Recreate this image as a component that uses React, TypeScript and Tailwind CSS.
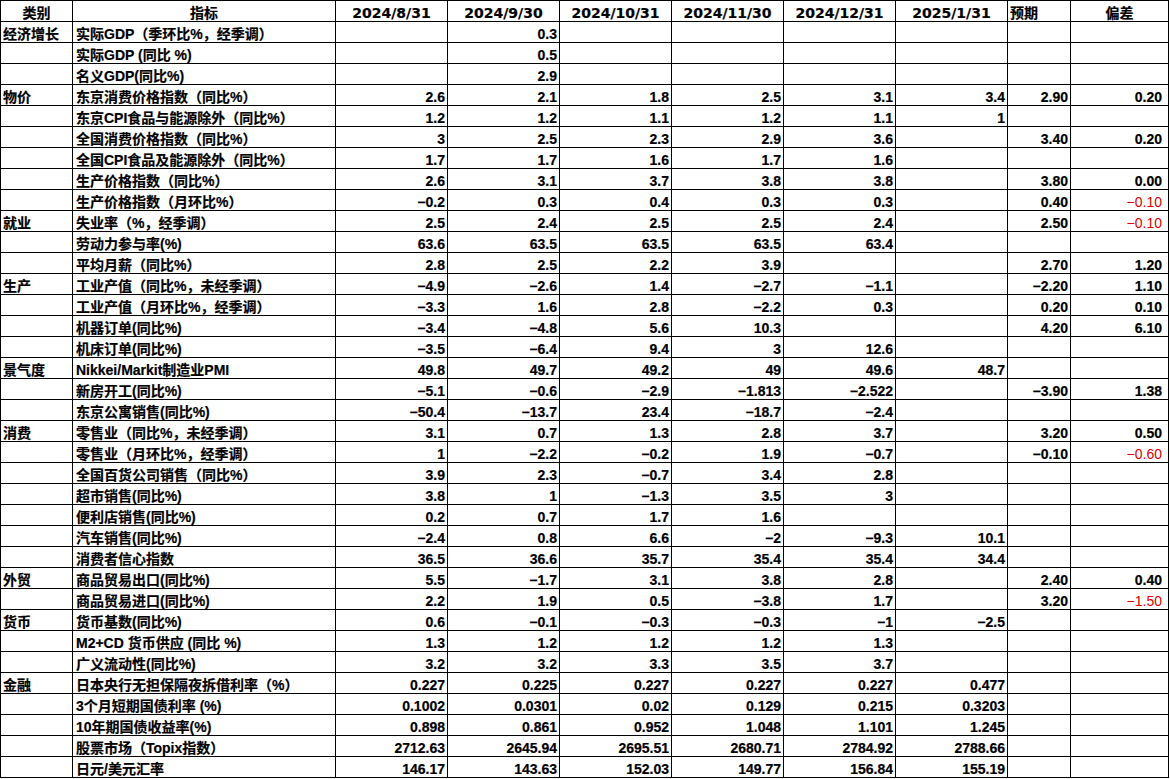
type Row = {
  cat: string;
  name: string;
  vals: string[];
  exp?: string;
  dev?: string;
  devRed?: boolean;
};

const M = "\u2212";

const rows: Row[] = [
  { cat: "经济增长", name: "实际GDP（季环比%，经季调）", vals: ["", "0.3", "", "", "", ""] },
  { cat: "", name: "实际GDP (同比 %)", vals: ["", "0.5", "", "", "", ""] },
  { cat: "", name: "名义GDP(同比%)", vals: ["", "2.9", "", "", "", ""] },
  { cat: "物价", name: "东京消费价格指数（同比%）", vals: ["2.6", "2.1", "1.8", "2.5", "3.1", "3.4"], exp: "2.90", dev: "0.20" },
  { cat: "", name: "东京CPI食品与能源除外（同比%）", vals: ["1.2", "1.2", "1.1", "1.2", "1.1", "1"] },
  { cat: "", name: "全国消费价格指数（同比%）", vals: ["3", "2.5", "2.3", "2.9", "3.6", ""], exp: "3.40", dev: "0.20" },
  { cat: "", name: "全国CPI食品及能源除外（同比%）", vals: ["1.7", "1.7", "1.6", "1.7", "1.6", ""] },
  { cat: "", name: "生产价格指数（同比%）", vals: ["2.6", "3.1", "3.7", "3.8", "3.8", ""], exp: "3.80", dev: "0.00" },
  { cat: "", name: "生产价格指数（月环比%）", vals: [M + "0.2", "0.3", "0.4", "0.3", "0.3", ""], exp: "0.40", dev: M + "0.10", devRed: true },
  { cat: "就业", name: "失业率（%，经季调）", vals: ["2.5", "2.4", "2.5", "2.5", "2.4", ""], exp: "2.50", dev: M + "0.10", devRed: true },
  { cat: "", name: "劳动力参与率(%)", vals: ["63.6", "63.5", "63.5", "63.5", "63.4", ""] },
  { cat: "", name: "平均月薪（同比%）", vals: ["2.8", "2.5", "2.2", "3.9", "", ""], exp: "2.70", dev: "1.20" },
  { cat: "生产", name: "工业产值（同比%，未经季调）", vals: [M + "4.9", M + "2.6", "1.4", M + "2.7", M + "1.1", ""], exp: M + "2.20", dev: "1.10" },
  { cat: "", name: "工业产值（月环比%，经季调）", vals: [M + "3.3", "1.6", "2.8", M + "2.2", "0.3", ""], exp: "0.20", dev: "0.10" },
  { cat: "", name: "机器订单(同比%)", vals: [M + "3.4", M + "4.8", "5.6", "10.3", "", ""], exp: "4.20", dev: "6.10" },
  { cat: "", name: "机床订单(同比%)", vals: [M + "3.5", M + "6.4", "9.4", "3", "12.6", ""] },
  { cat: "景气度", name: "Nikkei/Markit制造业PMI", vals: ["49.8", "49.7", "49.2", "49", "49.6", "48.7"] },
  { cat: "", name: "新房开工(同比%)", vals: [M + "5.1", M + "0.6", M + "2.9", M + "1.813", M + "2.522", ""], exp: M + "3.90", dev: "1.38" },
  { cat: "", name: "东京公寓销售(同比%)", vals: [M + "50.4", M + "13.7", "23.4", M + "18.7", M + "2.4", ""] },
  { cat: "消费", name: "零售业（同比%，未经季调）", vals: ["3.1", "0.7", "1.3", "2.8", "3.7", ""], exp: "3.20", dev: "0.50" },
  { cat: "", name: "零售业（月环比%，经季调）", vals: ["1", M + "2.2", M + "0.2", "1.9", M + "0.7", ""], exp: M + "0.10", dev: M + "0.60", devRed: true },
  { cat: "", name: "全国百货公司销售（同比%）", vals: ["3.9", "2.3", M + "0.7", "3.4", "2.8", ""] },
  { cat: "", name: "超市销售(同比%)", vals: ["3.8", "1", M + "1.3", "3.5", "3", ""] },
  { cat: "", name: "便利店销售(同比%)", vals: ["0.2", "0.7", "1.7", "1.6", "", ""] },
  { cat: "", name: "汽车销售(同比%)", vals: [M + "2.4", "0.8", "6.6", M + "2", M + "9.3", "10.1"] },
  { cat: "", name: "消费者信心指数", vals: ["36.5", "36.6", "35.7", "35.4", "35.4", "34.4"] },
  { cat: "外贸", name: "商品贸易出口(同比%)", vals: ["5.5", M + "1.7", "3.1", "3.8", "2.8", ""], exp: "2.40", dev: "0.40" },
  { cat: "", name: "商品贸易进口(同比%)", vals: ["2.2", "1.9", "0.5", M + "3.8", "1.7", ""], exp: "3.20", dev: M + "1.50", devRed: true },
  { cat: "货币", name: "货币基数(同比%)", vals: ["0.6", M + "0.1", M + "0.3", M + "0.3", M + "1", M + "2.5"] },
  { cat: "", name: "M2+CD 货币供应 (同比 %)", vals: ["1.3", "1.2", "1.2", "1.2", "1.3", ""] },
  { cat: "", name: "广义流动性(同比%)", vals: ["3.2", "3.2", "3.3", "3.5", "3.7", ""] },
  { cat: "金融", name: "日本央行无担保隔夜拆借利率（%）", vals: ["0.227", "0.225", "0.227", "0.227", "0.227", "0.477"] },
  { cat: "", name: "3个月短期国债利率 (%)", vals: ["0.1002", "0.0301", "0.02", "0.129", "0.215", "0.3203"] },
  { cat: "", name: "10年期国债收益率(%)", vals: ["0.898", "0.861", "0.952", "1.048", "1.101", "1.245"] },
  { cat: "", name: "股票市场（Topix指数）", vals: ["2712.63", "2645.94", "2695.51", "2680.71", "2784.92", "2788.66"] },
  { cat: "", name: "日元/美元汇率", vals: ["146.17", "143.63", "152.03", "149.77", "156.84", "155.19"] },
];

const dates = ["2024/8/31", "2024/9/30", "2024/10/31", "2024/11/30", "2024/12/31", "2025/1/31"];

const cell = "h-[21px] border-r border-b border-black flex items-end overflow-hidden whitespace-nowrap leading-[16px]";
const head = cell + " font-['DejaVu_Sans','Noto_Sans_CJK_SC',sans-serif] text-[14px] font-bold";

export default function App() {
  return (
    <div className="bg-white min-h-screen">
      <div className="grid w-fit grid-cols-[72px_263px_repeat(6,112px)_63px_98px] border-l border-t border-black text-black font-['Liberation_Sans','Noto_Sans_CJK_SC',sans-serif] text-[14px] font-bold [-webkit-text-stroke:0.2px_black]">
        <div className={head + " justify-center"}>类别</div>
        <div className={head + " justify-center"}>指标</div>
        {dates.map((d) => (
          <div key={d} className={head + " justify-center"}>{d}</div>
        ))}
        <div className={head + " justify-start pl-[2px]"}>预期</div>
        <div className={head + " justify-center"}>偏差</div>

        {rows.map((r, i) => (
          <div key={i} className="contents">
            <div className={cell + " pl-[2px]"}>{r.cat}</div>
            <div className={cell + " pl-[3px]"}>{r.name}</div>
            {r.vals.map((v, j) => (
              <div key={j} className={cell + " justify-end pr-[2px]"}>{v}</div>
            ))}
            <div className={cell + " justify-end pr-[2px]"}>{r.exp ?? ""}</div>
            <div className={cell + " justify-end pr-[6px]" + (r.devRed ? " text-[#e00000] font-normal [-webkit-text-stroke:0px]" : "")}>{r.dev ?? ""}</div>
          </div>
        ))}
      </div>
    </div>
  );
}
